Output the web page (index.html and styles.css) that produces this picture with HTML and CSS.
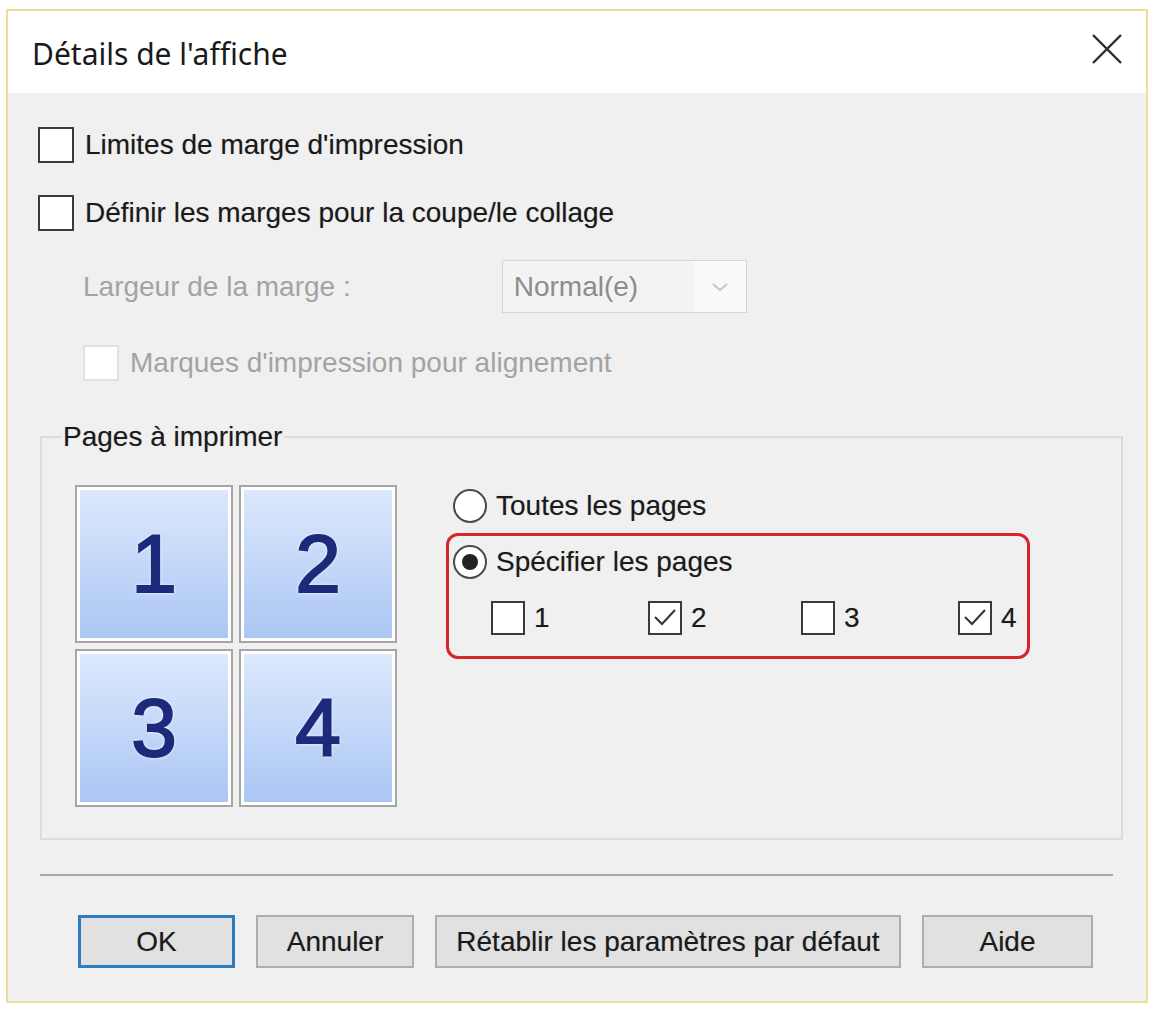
FILE: index.html
```html
<!DOCTYPE html>
<html lang="fr">
<head>
  <meta charset="UTF-8">
  <title>Détails de l'affiche</title>
  <link rel="stylesheet" href="styles.css">
</head>
<body>
  <div class="dialog">
    <div class="titlebar">
      <span class="title">Détails de l'affiche</span>
      <svg class="close" width="32" height="32" viewBox="0 0 32 32">
        <path d="M2 2 L30 30 M30 2 L2 30" stroke="#2b2b2b" stroke-width="2.4" fill="none"/>
      </svg>
    </div>

    <div class="content">
      <div class="row row-first">
        <span class="box"></span>
        <span class="label">Limites de marge d'impression</span>
      </div>
      <div class="row row-second">
        <span class="box"></span>
        <span class="label">Définir les marges pour la coupe/le collage</span>
      </div>

      <!-- disabled options -->
      <div class="row row-width">
        <span class="label muted">Largeur de la marge :</span>
        <div class="select">
          <span class="select-value">Normal(e)</span>
          <span class="select-arrow">
            <svg width="18" height="12" viewBox="0 0 18 12"><path d="M2 3 L9 9 L16 3" stroke="#c4c4c4" stroke-width="2" fill="none"/></svg>
          </span>
        </div>
      </div>
      <div class="row row-marks">
        <span class="box box-disabled"></span>
        <span class="label muted">Marques d'impression pour alignement</span>
      </div>

      <fieldset class="pages">
        <legend>Pages à imprimer</legend>
        <div class="pages-body">
          <div class="tiles">
            <div class="tile">1</div>
            <div class="tile">2</div>
            <div class="tile">3</div>
            <div class="tile">4</div>
          </div>
          <div class="choices">
            <div class="row radio-row">
              <span class="radio"></span>
              <span class="label">Toutes les pages</span>
            </div>
            <div class="highlight">
              <div class="row radio-row">
                <span class="radio checked"></span>
                <span class="label">Spécifier les pages</span>
              </div>
              <div class="page-checks">
                <div class="page-check"><span class="box small"></span><span class="label">1</span></div>
                <div class="page-check">
                  <span class="box small"><svg width="30" height="30" viewBox="0 0 30 30"><path d="M5 14 L12 21 L25 7" stroke="#333" stroke-width="2" fill="none"/></svg></span>
                  <span class="label">2</span>
                </div>
                <div class="page-check"><span class="box small"></span><span class="label">3</span></div>
                <div class="page-check">
                  <span class="box small"><svg width="30" height="30" viewBox="0 0 30 30"><path d="M5 14 L12 21 L25 7" stroke="#333" stroke-width="2" fill="none"/></svg></span>
                  <span class="label">4</span>
                </div>
              </div>
            </div>
          </div>
        </div>
      </fieldset>

      <div class="separator"></div>

      <div class="buttons">
        <button class="btn btn-ok">OK</button>
        <button class="btn btn-cancel">Annuler</button>
        <button class="btn btn-reset">Rétablir les paramètres par défaut</button>
        <button class="btn btn-help">Aide</button>
      </div>
    </div>
  </div>
</body>
</html>
```

FILE: styles.css
```css
body {
  margin: 0;
  padding: 0;
  background-color: #fff;
  font-family: "Liberation Sans", Arial, sans-serif;
  font-size: 28px;
  color: #1a1a1a;
}

.dialog {
  margin: 9px 0 0 6px;
  width: 1138px;
  height: 990px;
  border: 2px solid #eedd98;
  display: flex;
  flex-direction: column;
}

.titlebar {
  height: 82px;
  background-color: #fff;
  display: flex;
  align-items: center;
  justify-content: space-between;
  padding: 0 23px 0 25px;
}

.title {
  font-family: "Noto Sans", sans-serif;
  font-size: 30px;
  color: #1a1a1a;
  margin-top: 2px;
  margin-left: -1px;
}

.close {
  margin-top: -6px;
}

.content {
  flex-grow: 1;
  background-color: #f0f0f0;
  padding-left: 30px;
}

.row {
  display: flex;
  align-items: center;
}

.label {
  line-height: 32px;
  white-space: nowrap;
  text-shadow: 0 0 1px rgba(0, 0, 0, 0.25);
}

.muted {
  color: #a3a3a3;
  text-shadow: none;
}

.box {
  width: 32px;
  height: 32px;
  border: 2px solid #3a3a3a;
  background-color: #fff;
  margin-right: 11px;
  flex-shrink: 0;
  display: flex;
  align-items: center;
  justify-content: center;
}

.box-disabled {
  border-color: #e2e2e2;
}

.row-first {
  margin-top: 34px;
  height: 36px;
}

.row-second {
  margin-top: 32px;
  height: 36px;
}

.row-width {
  margin-top: 29px;
  height: 53px;
  padding-left: 45px;
}

.select {
  margin-left: 151px;
  width: 243px;
  height: 51px;
  border: 1px solid #d6d6d6;
  background-color: #f3f3f3;
  display: flex;
  align-items: center;
}

.select-value {
  color: #8c8c8c;
  padding-left: 11px;
  flex-grow: 1;
}

.select-arrow {
  width: 52px;
  height: 51px;
  background-color: #f9f9f9;
  display: flex;
  align-items: center;
  justify-content: center;
}

.row-marks {
  margin-top: 32px;
  height: 35px;
  padding-left: 45px;
}

.pages {
  margin: 41px 23px 0 2px;
  padding: 0 0 31px 19px;
  border: 2px solid #dcdcdc;
  min-width: 0;
}

.pages legend {
  padding: 0 2px;
  line-height: 32px;
  text-shadow: 0 0 1px rgba(0, 0, 0, 0.25);
}

.pages-body {
  display: flex;
  padding-top: 32px;
  padding-left: 14px;
}

.tiles {
  display: grid;
  grid-template-columns: 158px 158px;
  grid-template-rows: 158px 158px;
  gap: 6px;
}

.tile {
  border: 2px solid #a6a6a6;
  box-shadow: inset 0 0 0 3px #fff;
  background: linear-gradient(#dde9fc, #aac6f4);
  display: flex;
  align-items: center;
  justify-content: center;
  font-size: 82px;
  color: #1c2a7c;
  -webkit-text-stroke: 2px #1c2a7c;
  text-shadow: 0 0 4px #fff, 0 0 3px #fff;
}

.choices {
  margin-left: 49px;
  padding-top: 4px;
}

.radio-row {
  height: 34px;
  padding-left: 7px;
}

.radio {
  width: 30px;
  height: 30px;
  border: 2px solid #4a4a4a;
  border-radius: 50%;
  background-color: #fff;
  margin-right: 9px;
  display: flex;
  align-items: center;
  justify-content: center;
}

.radio.checked::after {
  content: "";
  width: 16px;
  height: 16px;
  border-radius: 50%;
  background-color: #222;
}

.highlight {
  margin-top: 10px;
  width: 578px;
  border: 3px solid #d8242b;
  border-radius: 12px;
  padding: 9px 0 21px 0;
}

.highlight .radio-row {
  padding-left: 4px;
}

.page-checks {
  display: grid;
  grid-template-columns: 157px 153px 157px 100px;
  margin-top: 22px;
  padding-left: 42px;
}

.page-check {
  display: flex;
  align-items: center;
  height: 34px;
}

.box.small {
  width: 30px;
  height: 30px;
  margin-right: 9px;
}

.separator {
  margin: 34px 33px 0 2px;
  height: 2px;
  background-color: #a8a8a8;
}

.buttons {
  display: flex;
  gap: 21px;
  margin-top: 39px;
  padding-left: 40px;
}

.btn {
  height: 53px;
  font-family: "Liberation Sans", Arial, sans-serif;
  font-size: 28px;
  color: #1a1a1a;
  background-color: #e1e1e1;
  border: 2px solid #adadad;
  padding: 0;
  text-shadow: 0 0 1px rgba(0, 0, 0, 0.25);
}

.btn-ok {
  width: 157px;
  border: 3px solid #2f7bc2;
}

.btn-cancel {
  width: 158px;
}

.btn-reset {
  width: 466px;
}

.btn-help {
  width: 171px;
}
```
